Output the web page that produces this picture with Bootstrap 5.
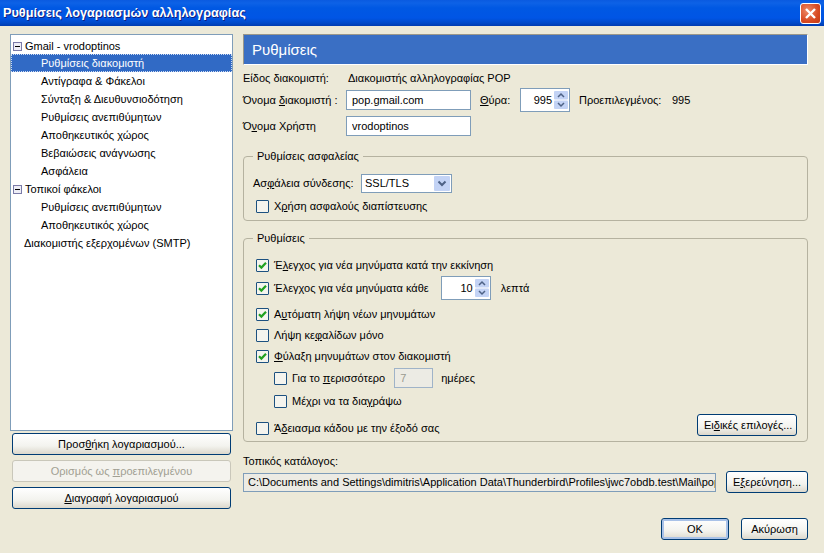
<!DOCTYPE html>
<html lang="el">
<head>
<meta charset="utf-8">
<title>Ρυθμίσεις λογαριασμών αλληλογραφίας</title>
<link rel="stylesheet" href="https://cdn.jsdelivr.net/npm/bootstrap@5.3.0/dist/css/bootstrap.min.css">
<style>
html,body{height:553px;overflow:hidden}
body{background:#ece9d8;font-family:"Liberation Sans","DejaVu Sans",sans-serif;font-size:11px;line-height:13px;color:#000;width:824px}
u{text-underline-offset:1px}
.titlebar{height:26px;background:linear-gradient(#0a5ae0 0,#0d62e6 3px,#0058e3 8px,#0055e5 18px,#0049c8 23px,#003cb0 26px);color:#fff;font-family:"Liberation Sans",sans-serif;font-weight:700;font-size:12.7px;padding:0 3px;text-shadow:1px 1px 0 #0f1f80}
.closebtn{width:21px;height:21px;border:1px solid #fff;border-radius:3px;background:radial-gradient(circle at 35% 35%,#ee8a68,#d84a22 60%,#c33a14);padding:0}
.mainrow{height:485px;padding:8px 16px 0 10px}
.leftcol{width:223px;margin-right:10px}
.treebox{height:397px;background:#fff;border:1px solid #7f9db9;padding:2px 0 0;margin-bottom:2px}
.treerow{height:18px;padding:0 0 0 13px;border:0;background:transparent;color:#000;border-radius:0!important;white-space:nowrap}
.treerow.sub{padding-left:30px}
.treerow.active{background:#316ac5;color:#fff;outline:1px dotted #cfdcf2;outline-offset:-1px}
.minusbox{width:9px;height:9px;margin:0 3px 0 -11px;flex:none}
.xpbtn{display:block;font-size:11px;line-height:13px;height:22px;padding:0 6px;border:1px solid #003c74;border-radius:3px;color:#000;background:linear-gradient(#fff,#f3f3ee 60%,#dcd8cc);white-space:nowrap}
.xpbtn:hover{color:#000;border-color:#003c74}
.xpbtn.wideb{width:219px;margin:0 2px 5px}
.xpbtn:disabled{border-color:#c9c7ba;background:#f4f3ee;color:#a19f92;opacity:1}
.xpbtn.okb{width:68px;box-shadow:inset 0 0 0 2px #a9c2e8}
.xpbtn.cancelb{width:67px}
.xpbtn.morebtn{width:100px}
.xpbtn.browsebtn{width:82px}
.rightcol{width:565px}
.headbar{height:31px;background:#3a6fc4;border-top:1px solid #9a978a;border-left:1px solid #9a978a;border-right:1px solid #fff;border-bottom:1px solid #fff;color:#fff;font-size:15px;padding-left:8px}
.inforow{height:13px;margin-top:7px}
.lbl1{width:103px;flex:none}
.infolbl{width:105px}
.xpinput{height:20px;border:1px solid #7f9db9;background:#fff;border-radius:0;font-size:11px;line-height:13px;padding:0 5px;color:#000;font-family:inherit}
.xpinput:focus{box-shadow:none;border-color:#7f9db9}
.wserver{width:125px;flex:none}
.formrow1{margin-top:5px;height:20px}
.formrow2{margin-top:6px;height:20px}
.spinbox{border:1px solid #7f9db9;background:#fff;padding:1px;flex:none}
.spinbox .val{flex:1;text-align:right;padding-right:2px}
.spinarrows{width:14px;height:18px;flex:none}
.portlbl{margin-left:9px;width:40px;flex:none}
.portspin{width:50px;height:24px}
.defl{margin-left:9px;width:93px;flex:none}
.gbox{border:1px solid #b5b2a0;border-radius:4px;padding:0;margin:0}
.gbox legend{float:none;width:auto;font-size:11px;line-height:13px;margin:0 0 0 9px;padding:0 4px;color:#000}
.gpad{padding:0 12px}
.secbox{margin-top:14px;height:71px}
.setbox{margin-top:11px;height:210px}
.csel{width:91px;height:19px;border:1px solid #7f9db9;background:#fff;padding:0 1px 0 3px;margin-top:11px}
.csel .arr{width:16px;height:15px;flex:none}
.seclbl{width:108px;padding-top:14px;margin-left:-3px;flex:none}
.form-check .xpcheck{width:13px;height:13px;margin:0 5px 0 0;border:1px solid #1c5180;border-radius:1px;background-color:#f4f4ee;flex:none;float:none}
.form-check .xpcheck:checked{background-color:#f4f4ee;border-color:#1c5180;background-image:url("data:image/svg+xml,%3Csvg xmlns='http://www.w3.org/2000/svg' viewBox='0 0 13 13'%3E%3Cpath d='M3 6.2l2.4 2.4L10 3.8' fill='none' stroke='%2321a121' stroke-width='2.2'/%3E%3C/svg%3E");background-size:13px}
.form-check .xpcheck:focus{box-shadow:none;border-color:#1c5180}
.chkrow{margin:0;padding:0;min-height:0;height:13px;white-space:nowrap}
.secchk{margin-top:7px}
.indent{padding-left:18px}
.daysinp{width:39px;height:20px;background:#ecebe4;color:#9a9a90;border:1px solid #9fb3c8;padding:0 5px;line-height:18px;margin-left:9px}
.pathinp{width:473px;height:19px;background:#ecebe4;border:1px solid #7f9db9;padding:0 4px;line-height:17px;overflow:hidden;white-space:nowrap}
.setinner{position:relative;height:100%}
.moreplace{position:absolute;right:10px;top:155px}
.c1{margin-top:14px}
.stackrow{margin-top:4px;height:24px}
.c2{margin-top:8px}
.c3{margin-top:8px}
.c4{margin-top:5px;height:20px}
.c5{margin-top:7px}
.c6{margin-top:14px}
.minspin{width:50px;height:24px;margin-left:12px}
.minlbl{margin-left:10px}
.dirlbl{margin-top:13px}
.dirrow{margin-top:3px;height:22px}
.actionrow{margin-top:25px}
.gapok{gap:12px}
</style>
</head>
<body class="m-0">
<div class="titlebar d-flex align-items-center justify-content-between">
  <span>Ρυθμίσεις λογαριασμών αλληλογραφίας</span>
  <button class="closebtn d-flex align-items-center justify-content-center" aria-label="Close">
    <svg width="13" height="13" viewBox="0 0 13 13"><path d="M2 2l9 9M11 2l-9 9" stroke="#fff" stroke-width="2.4"/></svg>
  </button>
</div>
<div class="mainrow d-flex">
  <div class="leftcol">
    <div class="treebox">
      <div class="list-group list-group-flush">
        <div class="treerow list-group-item d-flex align-items-center"><svg class="minusbox" viewBox="0 0 9 9"><rect x=".5" y=".5" width="8" height="8" fill="#eeeef6" stroke="#7b7ba8"/><path d="M2 4.5h5" stroke="#000"/></svg>Gmail - vrodoptinos</div>
        <div class="treerow sub list-group-item active d-flex align-items-center">Ρυθμίσεις διακομιστή</div>
        <div class="treerow sub list-group-item d-flex align-items-center">Αντίγραφα &amp; Φάκελοι</div>
        <div class="treerow sub list-group-item d-flex align-items-center">Σύνταξη &amp; Διευθυνσιοδότηση</div>
        <div class="treerow sub list-group-item d-flex align-items-center">Ρυθμίσεις ανεπιθύμητων</div>
        <div class="treerow sub list-group-item d-flex align-items-center">Αποθηκευτικός χώρος</div>
        <div class="treerow sub list-group-item d-flex align-items-center">Βεβαιώσεις ανάγνωσης</div>
        <div class="treerow sub list-group-item d-flex align-items-center">Ασφάλεια</div>
        <div class="treerow list-group-item d-flex align-items-center"><svg class="minusbox" viewBox="0 0 9 9"><rect x=".5" y=".5" width="8" height="8" fill="#eeeef6" stroke="#7b7ba8"/><path d="M2 4.5h5" stroke="#000"/></svg>Τοπικοί φάκελοι</div>
        <div class="treerow sub list-group-item d-flex align-items-center">Ρυθμίσεις ανεπιθύμητων</div>
        <div class="treerow sub list-group-item d-flex align-items-center">Αποθηκευτικός χώρος</div>
        <div class="treerow list-group-item d-flex align-items-center">Διακομιστής εξερχομένων (SMTP)</div>
      </div>
    </div>
    <button class="btn xpbtn wideb">Προσ<u>θ</u>ήκη λογαριασμού...</button>
    <button class="btn xpbtn wideb" disabled>Ορισμός ως <u>π</u>ροεπιλεγμένου</button>
    <button class="btn xpbtn wideb"><u>Δ</u>ιαγραφή λογαριασμού</button>
  </div>
  <div class="rightcol">
    <div class="headbar d-flex align-items-center">Ρυθμίσεις</div>
    <div class="inforow d-flex"><span class="lbl1 infolbl">Είδος διακομιστή:</span><span>Διακομιστής αλληλογραφίας POP</span></div>
    <div class="formrow1 d-flex align-items-center">
      <span class="lbl1">Όνομα <u>δ</u>ιακομιστή :</span>
      <input class="form-control xpinput wserver" value="pop.gmail.com">
      <span class="portlbl"><u>Θ</u>ύρα:</span>
      <div class="spinbox d-flex align-items-center portspin">
        <span class="val">995</span>
        <svg class="spinarrows" viewBox="0 0 14 18"><rect width="14" height="8.5" rx="1" fill="#c3d3f5"/><rect y="9.5" width="14" height="8.5" rx="1" fill="#c3d3f5"/><path d="M4 6l3-3 3 3M4 12l3 3 3-3" fill="none" stroke="#4d6185" stroke-width="1.5"/></svg>
      </div>
      <span class="defl">Προεπιλεγμένος:</span><span>995</span>
    </div>
    <div class="formrow2 d-flex align-items-center">
      <span class="lbl1">Ό<u>ν</u>ομα Χρήστη</span>
      <input class="form-control xpinput wserver" value="vrodoptinos">
    </div>
    <fieldset class="gbox secbox">
      <legend>Ρυθμίσεις ασφαλείας</legend>
      <div class="gpad">
        <div class="d-flex align-items-start">
          <span class="seclbl">Ασ<u>φ</u>άλεια σύνδεσης:</span>
          <div class="csel d-flex align-items-center justify-content-between"><span>SSL/TLS</span>
            <svg class="arr" viewBox="0 0 16 15"><rect width="16" height="15" rx="1" fill="#c3d3f5"/><path d="M4.5 5.5L8 9l3.5-3.5" fill="none" stroke="#4d6185" stroke-width="2"/></svg>
          </div>
        </div>
        <label class="form-check d-flex align-items-center chkrow secchk"><input type="checkbox" class="form-check-input xpcheck"><span>Χ<u>ρ</u>ήση ασφαλούς διαπίστευσης</span></label>
      </div>
    </fieldset>
    <fieldset class="gbox setbox">
      <legend>Ρυθμίσεις</legend>
      <div class="setinner gpad">
        <label class="form-check d-flex align-items-center chkrow c1"><input type="checkbox" class="form-check-input xpcheck" checked><span>Έ<u>λ</u>εγχος για νέα μηνύματα κατά την εκκίνηση</span></label>
        <div class="d-flex align-items-center stackrow">
          <label class="form-check d-flex align-items-center chkrow"><input type="checkbox" class="form-check-input xpcheck" checked><span>Έλεγ<u>χ</u>ος για νέα μηνύματα κάθε</span></label>
          <div class="spinbox d-flex align-items-center minspin"><span class="val">10</span>
            <svg class="spinarrows" viewBox="0 0 14 18"><rect width="14" height="8.5" rx="1" fill="#c3d3f5"/><rect y="9.5" width="14" height="8.5" rx="1" fill="#c3d3f5"/><path d="M4 6l3-3 3 3M4 12l3 3 3-3" fill="none" stroke="#4d6185" stroke-width="1.5"/></svg>
          </div>
          <span class="minlbl">λεπτά</span>
        </div>
        <label class="form-check d-flex align-items-center chkrow c2"><input type="checkbox" class="form-check-input xpcheck" checked><span>Α<u>υ</u>τόματη λήψη νέων μηνυμάτων</span></label>
        <label class="form-check d-flex align-items-center chkrow c3"><input type="checkbox" class="form-check-input xpcheck"><span>Λήψη κε<u>φ</u>αλίδων μόνο</span></label>
        <label class="form-check d-flex align-items-center chkrow c3"><input type="checkbox" class="form-check-input xpcheck" checked><span><u>Φ</u>ύλαξη μηνυμάτων στον διακομιστή</span></label>
        <div class="d-flex align-items-center indent c4">
          <label class="form-check d-flex align-items-center chkrow"><input type="checkbox" class="form-check-input xpcheck"><span>Για το <u>π</u>ερισσότερο</span></label>
          <div class="daysinp">7</div>
          <span class="ms-2">ημέρες</span>
        </div>
        <label class="form-check d-flex align-items-center chkrow indent c5"><input type="checkbox" class="form-check-input xpcheck"><span>Μέχρι να τα δια<u>γ</u>ράψω</span></label>
        <label class="form-check d-flex align-items-center chkrow c6"><input type="checkbox" class="form-check-input xpcheck"><span>Ά<u>δ</u>ειασμα κάδου με την έξοδό σας</span></label>
        <div class="moreplace"><button class="btn xpbtn morebtn">Ει<u>δ</u>ικές επιλογές...</button></div>
      </div>
    </fieldset>
    <div class="dirlbl">Τοπικός κατάλογος:</div>
    <div class="d-flex align-items-center justify-content-between dirrow">
      <div class="pathinp">C:\Documents and Settings\dimitris\Application Data\Thunderbird\Profiles\jwc7obdb.test\Mail\pop</div>
      <button class="btn xpbtn browsebtn">Ε<u>ξ</u>ερεύνηση...</button>
    </div>
    <div class="d-flex justify-content-end gapok actionrow">
      <button class="btn xpbtn okb">OK</button>
      <button class="btn xpbtn cancelb">Ακύρωση</button>
    </div>
  </div>
</div>
</body>
</html>
